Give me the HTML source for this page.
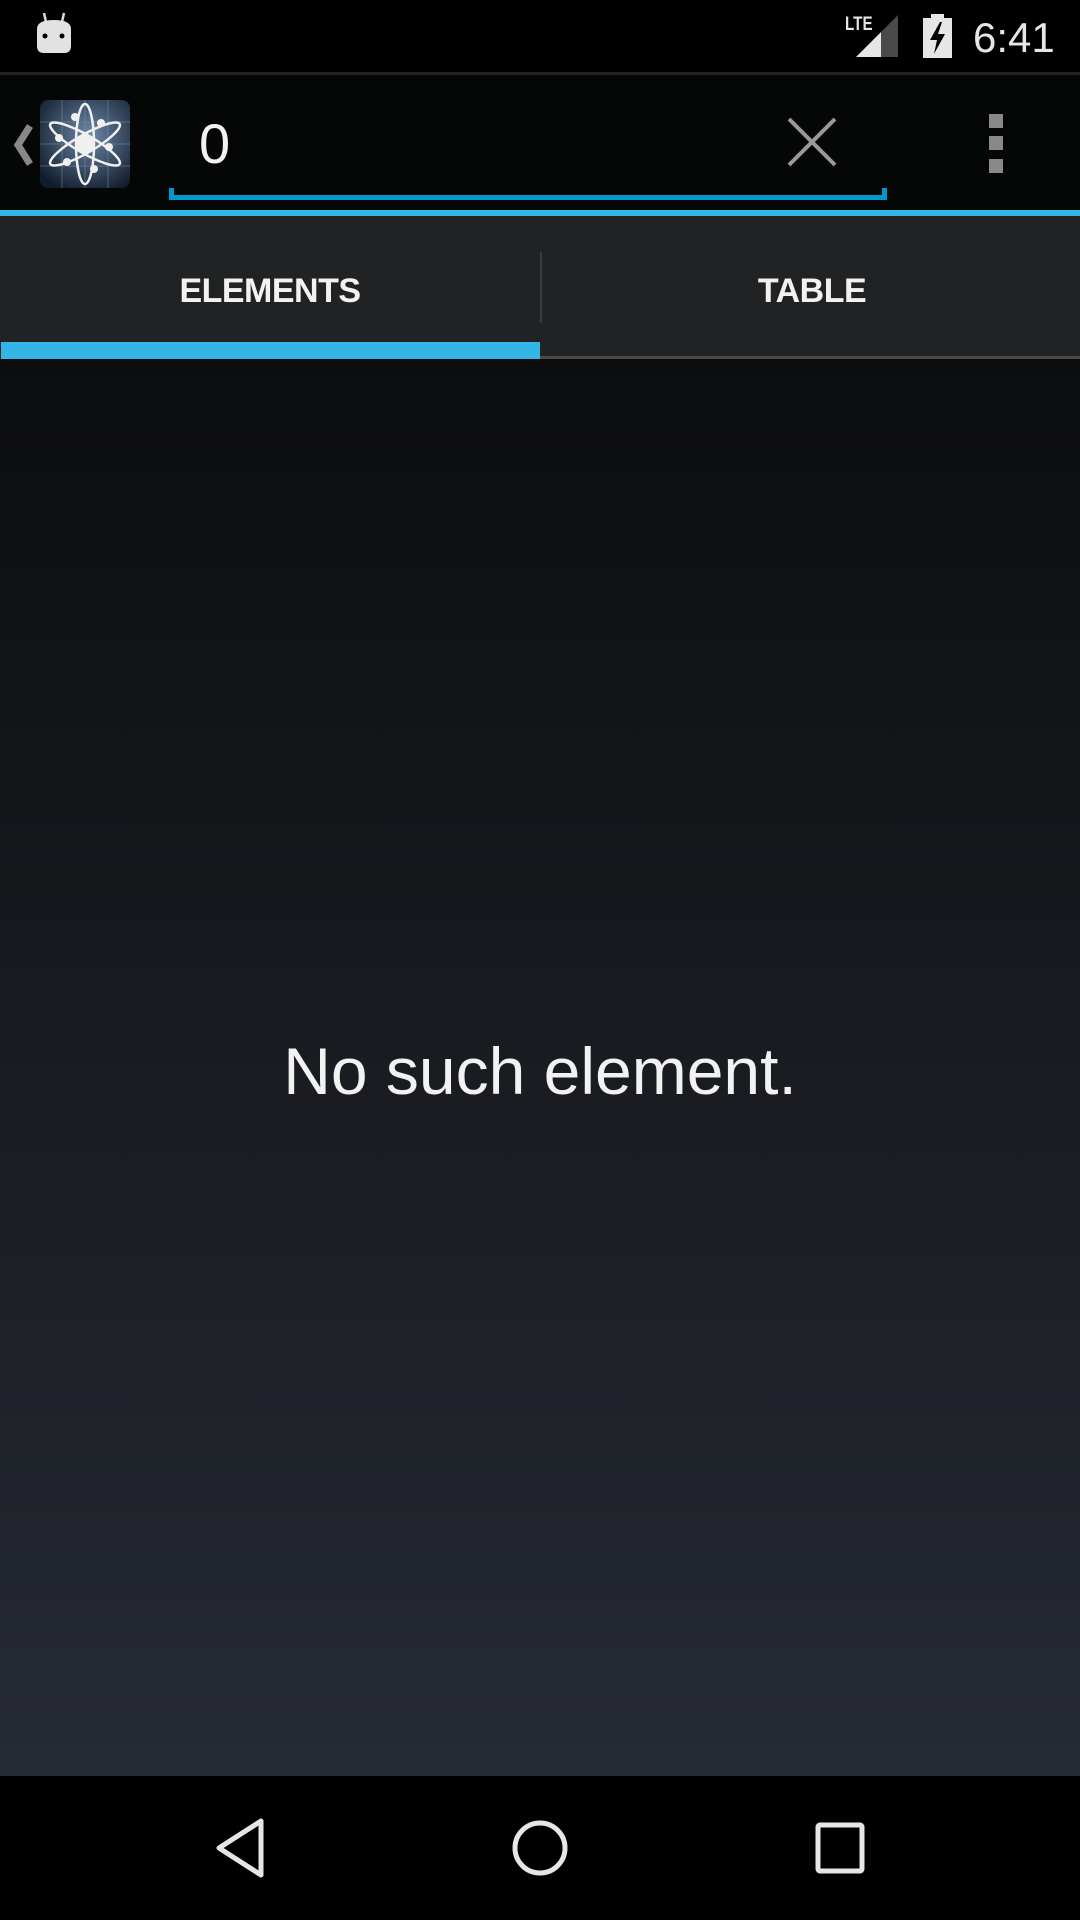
<!DOCTYPE html>
<html><head><meta charset="utf-8"><style>
*{margin:0;padding:0;box-sizing:border-box}
html,body{width:1080px;height:1920px;overflow:hidden;background:#000;font-family:"Liberation Sans",sans-serif}
.abs{position:absolute}
#status{left:0;top:0;width:1080px;height:72px;background:#000}
#sdiv{left:0;top:72px;width:1080px;height:3px;background:#222}
#abar{left:0;top:75px;width:1080px;height:135px;background:#050606}
#blue{left:0;top:210px;width:1080px;height:6px;background:#33b5e5}
#tabs{left:0;top:216px;width:1080px;height:143px;background:#212224}
#body{left:0;top:359px;width:1080px;height:1417px;background:linear-gradient(#0c0d0f,#262a33)}
#nav{left:0;top:1776px;width:1080px;height:144px;background:#000}
.tab{top:265px;font-weight:bold;font-size:34px;color:#f2f2f2;text-align:center;width:540px;line-height:52px;letter-spacing:-0.5px}
</style></head><body>
<div id="status" class="abs"></div>
<div id="sdiv" class="abs"></div>
<svg class="abs" style="left:30px;top:8px" width="50" height="50" viewBox="0 0 50 50">
<line x1="14" y1="5" x2="16" y2="14" stroke="#ddd" stroke-width="2.5"/>
<line x1="34" y1="5" x2="32" y2="14" stroke="#ddd" stroke-width="2.5"/>
<path d="M7 21 Q7 12 24 12 Q41 12 41 21 L41 38 Q41 45 34 45 L14 45 Q7 45 7 38 Z" fill="#e2e2e2"/>
<circle cx="15" cy="28" r="2.5" fill="#000"/><circle cx="32" cy="28" r="2.5" fill="#000"/>
</svg>
<div class="abs" style="left:845px;top:14px;font-size:19px;font-weight:bold;color:#e6e6e6;transform:scaleX(0.8);transform-origin:left">LTE</div>
<svg class="abs" style="left:856px;top:15px" width="43" height="43"><polygon points="0,42 25,17 25,42" fill="#e6e6e6"/><polygon points="25,17 42,0 42,42 25,42" fill="#4a4a4a"/></svg>
<svg class="abs" style="left:923px;top:14px" width="29" height="44"><rect x="8" y="0" width="13" height="4" fill="#e6e6e6"/><rect x="0" y="4" width="29" height="40" fill="#e6e6e6"/><polygon points="17,8 7,26 14,26 11,40 22,20 15,20 19,8" fill="#000"/></svg>
<div class="abs" style="left:973px;top:14px;font-size:42px;color:#e6e6e6;line-height:48px">6:41</div>

<div id="abar" class="abs"></div>
<svg class="abs" style="left:12px;top:124px" width="22" height="42"><polyline points="18,2 6,21 18,40" fill="none" stroke="#888" stroke-width="7"/></svg>
<svg class="abs" style="left:40px;top:100px" width="90" height="88" viewBox="0 0 90 88">
<defs><radialGradient id="g" cx="0.55" cy="0.4" r="0.7"><stop offset="0" stop-color="#6d88a8"/><stop offset="1" stop-color="#111c2c"/></radialGradient></defs>
<rect width="90" height="88" rx="8" fill="url(#g)"/>
<g stroke="#7f92aa" stroke-width="1" opacity="0.5"><line x1="22" y1="0" x2="22" y2="88"/><line x1="45" y1="0" x2="45" y2="88"/><line x1="68" y1="0" x2="68" y2="88"/><line x1="0" y1="22" x2="90" y2="22"/><line x1="0" y1="44" x2="90" y2="44"/><line x1="0" y1="66" x2="90" y2="66"/></g>
<g fill="none" stroke="#f0f0f0" stroke-width="2.5">
<ellipse cx="45" cy="44" rx="9" ry="40"/>
<ellipse cx="45" cy="44" rx="9" ry="40" transform="rotate(60 45 44)"/>
<ellipse cx="45" cy="44" rx="9" ry="40" transform="rotate(-60 45 44)"/></g>
<g fill="#f0f0f0"><circle cx="45" cy="44" r="9"/><circle cx="35" cy="17" r="4"/><circle cx="61" cy="23" r="4"/><circle cx="19" cy="38" r="4"/><circle cx="69" cy="47" r="4"/><circle cx="27" cy="62" r="4"/><circle cx="54" cy="69" r="4"/></g>
</svg>
<div class="abs" style="left:199px;top:112px;font-size:56px;color:#f2f2f2;line-height:64px">0</div>
<div class="abs" style="left:169px;top:195px;width:718px;height:5px;background:#0099cc"></div>
<div class="abs" style="left:169px;top:188px;width:5px;height:10px;background:#0099cc"></div>
<div class="abs" style="left:882px;top:188px;width:5px;height:10px;background:#0099cc"></div>
<svg class="abs" style="left:786px;top:116px" width="52" height="52"><g stroke="#9a9a9a" stroke-width="4"><line x1="3" y1="3" x2="49" y2="49"/><line x1="49" y1="3" x2="3" y2="49"/></g></svg>
<div class="abs" style="left:989px;top:114px;width:14px;height:14px;background:#888"></div>
<div class="abs" style="left:989px;top:136px;width:14px;height:14px;background:#888"></div>
<div class="abs" style="left:989px;top:159px;width:14px;height:14px;background:#888"></div>

<div id="blue" class="abs"></div>
<div id="tabs" class="abs"></div>
<div class="abs" style="left:540px;top:252px;width:2px;height:71px;background:#3a3b3d"></div>
<div class="abs tab" style="left:0">ELEMENTS</div>
<div class="abs tab" style="left:542px">TABLE</div>
<div class="abs" style="left:1px;top:342px;width:539px;height:17px;background:#33b5e5"></div>
<div class="abs" style="left:540px;top:356px;width:540px;height:3px;background:#4a4a4a"></div>

<div id="body" class="abs"></div>
<div class="abs" style="left:0;top:1031px;width:1080px;text-align:center;font-size:66px;color:#f2f2f2;line-height:80px">No such element.</div>

<div id="nav" class="abs"></div>
<svg class="abs" style="left:210px;top:1815px" width="60" height="66"><polygon points="51,6 51,60 9,33" fill="none" stroke="#e6e6e6" stroke-width="5" stroke-linejoin="round"/></svg>
<svg class="abs" style="left:510px;top:1818px" width="60" height="60"><circle cx="30" cy="30" r="25" fill="none" stroke="#e6e6e6" stroke-width="5"/></svg>
<svg class="abs" style="left:814px;top:1821px" width="52" height="54"><rect x="4" y="4" width="44" height="46" rx="2" fill="none" stroke="#e6e6e6" stroke-width="5"/></svg>
</body></html>
